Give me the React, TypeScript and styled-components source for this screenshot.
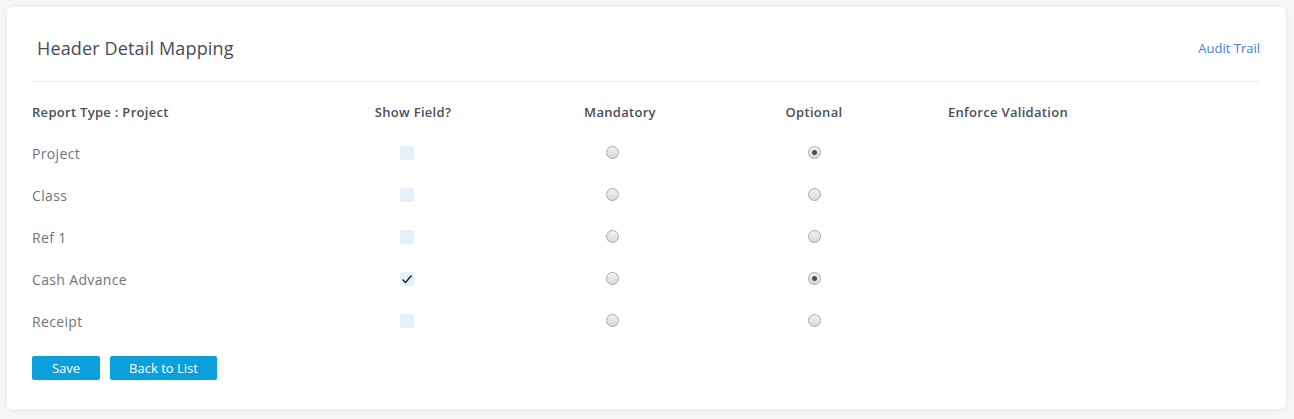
import React from "react";
import styled, { createGlobalStyle } from "styled-components";

const Global = createGlobalStyle`
  html, body { margin: 0; padding: 0; background: #f6f6f7; }
  body { font-family: "Open Sans", "Noto Sans", sans-serif; }
  * { box-sizing: border-box; }
`;

const Page = styled.div`
  padding: 7px 8px 10px 7px;
`;

const Card = styled.div`
  background: #ffffff;
  border-radius: 6px;
  box-shadow: 0 1px 6px rgba(0, 0, 0, 0.06);
  padding: 0 26px 29px 25px;
`;

const Header = styled.div`
  display: flex;
  align-items: center;
  justify-content: space-between;
  padding: 28px 0 20px 5px;
  border-bottom: 1px solid #ececec;
`;

const Title = styled.h1`
  margin: 0;
  font-size: 18px;
  letter-spacing: 0.15px;
  line-height: 26px;
  font-weight: 500;
  color: #474c57;
`;

const Link = styled.a`
  font-size: 13px;
  color: #3f7fd8;
  text-decoration: none;
  cursor: pointer;
`;

const Grid = styled.div`
  display: grid;
  grid-template-columns: 284px 194px 220px 168px 1fr;
`;

const HeadRow = styled(Grid)`
  margin-top: 19px;
  height: 22px;
  margin-bottom: 9px;
  align-items: center;
`;

const HeadCell = styled.div<{ $align?: "left" | "center"; $pad?: number }>`
  font-size: 13px;
  font-weight: 600;
  letter-spacing: 0.3px;
  color: #4a4f59;
  text-align: ${(p) => p.$align ?? "center"};
  padding-left: ${(p) => p.$pad ?? 0}px;
`;

const Row = styled(Grid)`
  height: 42px;
  align-items: center;
`;

const Label = styled.div`
  font-size: 14px;
  letter-spacing: 0.35px;
  color: #707479;
  padding-top: 1px;
`;

const ControlCell = styled.div<{ $inset: number; $lift?: number }>`
  display: flex;
  padding-left: ${(p) => p.$inset}px;
  margin-top: ${(p) => -(p.$lift ?? 0)}px;
`;

const Check = styled.span`
  width: 14px;
  height: 14px;
  border-radius: 2px;
  background: #e4f1fb;
  display: flex;
  align-items: center;
  justify-content: center;
`;

const Radio = styled.span<{ $on?: boolean }>`
  width: 13px;
  height: 13px;
  border-radius: 50%;
  border: 1px solid #a9a9a9;
  background: linear-gradient(180deg, #f2f2f2 0%, #d9d9d9 100%);
  display: flex;
  align-items: center;
  justify-content: center;
  &::after {
    content: "";
    display: ${(p) => (p.$on ? "block" : "none")};
    width: 5px;
    height: 5px;
    border-radius: 50%;
    background: #4d4d4d;
  }
`;

const Actions = styled.div`
  display: flex;
  gap: 10px;
  margin-top: 14px;
`;

const Button = styled.button<{ $w: number }>`
  width: ${(p) => p.$w}px;
  height: 24px;
  border: none;
  border-radius: 2px;
  background: #0ba0dc;
  color: #ffffff;
  font-family: inherit;
  font-size: 13px;
  font-weight: 500;
  padding: 0;
  cursor: pointer;
`;

const rows = [
  { name: "Project", show: false, optional: true },
  { name: "Class", show: false, optional: false },
  { name: "Ref 1", show: false, optional: false },
  { name: "Cash Advance", show: true, optional: true },
  { name: "Receipt", show: false, optional: false },
];

export default function App() {
  return (
    <Page>
      <Global />
      <Card>
        <Header>
          <Title>Header Detail Mapping</Title>
          <Link>Audit Trail</Link>
        </Header>
        <HeadRow>
          <HeadCell $align="left">Report Type : Project</HeadCell>
          <HeadCell>Show Field?</HeadCell>
          <HeadCell>Mandatory</HeadCell>
          <HeadCell>Optional</HeadCell>
          <HeadCell $align="left" $pad={50}>Enforce Validation</HeadCell>
        </HeadRow>
        {rows.map((r) => (
          <Row key={r.name}>
            <Label>{r.name}</Label>
            <ControlCell $inset={84}>
              <Check>
                {r.show && (
                  <svg width="12" height="12" viewBox="0 0 12 12">
                    <polyline points="1.5,6.5 4.5,9.5 10.5,2.5" fill="none" stroke="#1c1c1c" strokeWidth="1.4" />
                  </svg>
                )}
              </Check>
            </ControlCell>
            <ControlCell $inset={96} $lift={2}>
              <Radio />
            </ControlCell>
            <ControlCell $inset={78} $lift={2}>
              <Radio $on={r.optional} />
            </ControlCell>
            <div />
          </Row>
        ))}
        <Actions>
          <Button $w={68}>Save</Button>
          <Button $w={107}>Back to List</Button>
        </Actions>
      </Card>
    </Page>
  );
}
